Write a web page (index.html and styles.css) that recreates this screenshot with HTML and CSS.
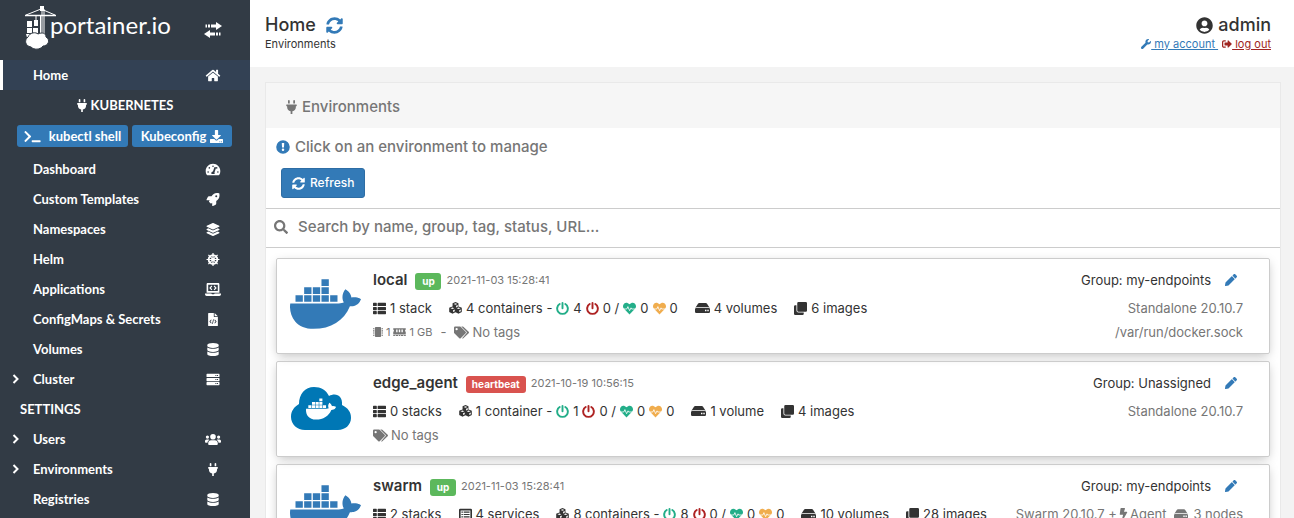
FILE: index.html
```html
<!DOCTYPE html>
<html lang="en">
<head>
<meta charset="utf-8">
<title>Portainer</title>
<link rel="stylesheet" href="styles.css">
</head>
<body>
<svg class="sprite" aria-hidden="true">
  <symbol id="home" viewBox="0 0 576 512"><path d="M280.37 148.26L96 300.11V464a16 16 0 0 0 16 16l112.06-.29a16 16 0 0 0 15.92-16V368a16 16 0 0 1 16-16h64a16 16 0 0 1 16 16v95.64a16 16 0 0 0 16 16.05L464 480a16 16 0 0 0 16-16V300L295.67 148.26a12.19 12.19 0 0 0-15.3 0zM571.6 251.47L488 182.56V44.05a12 12 0 0 0-12-12h-56a12 12 0 0 0-12 12v72.61L318.47 43a48 48 0 0 0-61 0L4.34 251.47a12 12 0 0 0-1.6 16.9l25.5 31A12 12 0 0 0 45.15 301l235.22-193.74a12.19 12.19 0 0 1 15.3 0L530.9 301a12 12 0 0 0 16.9-1.6l25.5-31a12 12 0 0 0-1.7-16.93z"/></symbol>
  <symbol id="plug" viewBox="0 0 384 512"><path d="M320 32a32 32 0 0 0-64 0v96h64zm48 128H16a16 16 0 0 0-16 16v32a16 16 0 0 0 16 16h16v32a160 160 0 0 0 128 156.8V512h64v-99.2A160 160 0 0 0 352 256v-32h16a16 16 0 0 0 16-16v-32a16 16 0 0 0-16-16zM128 32a32 32 0 0 0-64 0v96h64z"/></symbol>
  <symbol id="terminal" viewBox="0 0 640 512"><path d="M257.981 272.971L63.638 467.314c-9.373 9.373-24.569 9.373-33.941 0L7.029 444.647c-9.357-9.357-9.375-24.522-.04-33.901L161.011 256 6.99 101.255c-9.335-9.379-9.317-24.544.04-33.901l22.667-22.667c9.373-9.373 24.569-9.373 33.941 0L257.981 239.03c9.373 9.372 9.373 24.568 0 33.941zM640 456v-32c0-13.255-10.745-24-24-24H312c-13.255 0-24 10.745-24 24v32c0 13.255 10.745 24 24 24h304c13.255 0 24-10.745 24-24z"/></symbol>
  <symbol id="download" viewBox="0 0 512 512"><path fill-rule="evenodd" d="M216 0h80c13.3 0 24 10.7 24 24v168h87.7c17.8 0 26.7 21.5 14.1 34.1L269.7 378.3c-7.5 7.5-19.8 7.5-27.3 0L90.1 226.1c-12.6-12.6-3.7-34.1 14.1-34.1H192V24c0-13.3 10.7-24 24-24zm296 376v112c0 13.3-10.7 24-24 24H24c-13.3 0-24-10.7-24-24V376c0-13.3 10.7-24 24-24h146.7l49 49c20.1 20.1 52.5 20.1 72.6 0l49-49H488c13.3 0 24 10.7 24 24zM368 464a20 20 0 1 0 40 0 20 20 0 0 0-40 0zm64 0a20 20 0 1 0 40 0 20 20 0 0 0-40 0z"/></symbol>
  <symbol id="gauge" viewBox="0 0 576 512"><path fill-rule="evenodd" d="M288 32C129 32 0 161 0 320c0 53 14 102 39 145 6 10 16 15 27 15h444c11 0 21-5 27-15 25-43 39-92 39-145C576 161 447 32 288 32zm0 64a32 32 0 1 1 0 64 32 32 0 0 1 0-64zM96 384a32 32 0 1 1 0-64 32 32 0 0 1 0 64zm48-160a32 32 0 1 1 0-64 32 32 0 0 1 0 64zm247-61c13 4 20 18 15 30l-60 181c14 22 8 48 1 58H229c-20-46 7-92 55-96l61-168c5-13 16-14 46-5zm41 61a32 32 0 1 1 0-64 32 32 0 0 1 0 64zm48 160a32 32 0 1 1 0-64 32 32 0 0 1 0 64z"/></symbol>
  <symbol id="rocket" viewBox="0 0 512 512"><path d="M505.12 19.09c-1.19-5.53-6.66-11-12.21-12.19C460.72 0 435.51 0 410.41 0 307.18 0 245.27 55.2 199.05 128H94.84c-16.35.02-35.56 11.88-42.89 26.48L2.52 253.3A28.4 28.4 0 0 0 0 264a24 24 0 0 0 24 24h103.82l-22.48 22.47c-11.36 11.36-12.99 32.26 0 45.25l50.91 50.9c11.15 11.19 32.15 13.16 45.27 0L224 384.16V488a24 24 0 0 0 24 24 28.56 28.56 0 0 0 10.71-2.52l98.73-49.39c14.63-7.29 26.51-26.5 26.51-42.86V312.8C456.55 266.48 512 204.39 512 101.7c.08-25.2.08-50.4-6.88-82.61zM384 168a40 40 0 1 1 40-40 40 40 0 0 1-40 40z"/></symbol>
  <symbol id="layers" viewBox="0 0 512 512"><path d="M12.41 148.02l232.94 105.67c6.8 3.09 14.49 3.09 21.29 0l232.94-105.67c16.55-7.51 16.55-32.52 0-40.03L266.65 2.31a25.607 25.607 0 0 0-21.29 0L12.41 107.98c-16.55 7.51-16.55 32.53 0 40.04zm487.18 88.28l-58.09-26.33-161.64 73.27c-7.56 3.43-15.59 5.17-23.86 5.17s-16.29-1.74-23.86-5.17L70.51 209.97l-58.1 26.33c-16.55 7.5-16.55 32.5 0 40l232.94 105.59c6.8 3.08 14.49 3.08 21.29 0L499.59 276.3c16.55-7.5 16.55-32.5 0-40zm0 127.8l-57.87-26.23-161.86 73.37c-7.56 3.43-15.59 5.17-23.86 5.17s-16.29-1.74-23.86-5.17L70.29 337.87 12.41 364.1c-16.55 7.5-16.55 32.5 0 40l232.94 105.59c6.8 3.08 14.49 3.08 21.29 0L499.59 404.1c16.55-7.5 16.55-32.5 0-40z"/></symbol>
  <symbol id="helm" viewBox="0 0 512 512"><g fill="none" stroke="currentColor"><circle cx="256" cy="256" r="170" stroke-width="75"/><path stroke-width="48" d="M256 0v512M0 256h512M75 75l362 362M437 75L75 437"/></g><circle cx="256" cy="256" r="65"/></symbol>
  <symbol id="laptop" viewBox="0 0 640 512"><path fill-rule="evenodd" d="M64 48c0-26 22-48 48-48h416c26 0 48 22 48 48v336H64zm64 16v256h384V64zM0 416h255c5 20 13 32 33 32h64c20 0 27-12 33-32h255v32c0 35-29 64-64 64H64c-35 0-64-29-64-64z"/><path fill="none" stroke="currentColor" stroke-width="48" d="M275 115l-72 77 72 77M365 115l72 77-72 77"/></symbol>
  <symbol id="filecode" viewBox="0 0 384 512"><path fill-rule="evenodd" d="M0 24C0 11 11 0 24 0h200v136c0 13 11 24 24 24h136v328c0 13-11 24-24 24H24c-13 0-24-11-24-24zM256 0l128 128H256zM115 256l-65 79 65 79 24-22-47-57 47-57zm82-5l-40 174 28 6 41-174zm72 5l-24 22 47 57-47 57 24 22 65-79z"/></symbol>
  <symbol id="database" viewBox="0 0 448 512"><path d="M448 73.143v45.714C448 159.143 347.667 192 224 192S0 159.143 0 118.857V73.143C0 32.857 100.333 0 224 0s224 32.857 224 73.143zM448 176v102.857C448 319.143 347.667 352 224 352S0 319.143 0 278.857V176c48.125 33.143 136.208 48.572 224 48.572S399.874 209.143 448 176zm0 160v102.857C448 479.143 347.667 512 224 512S0 479.143 0 438.857V336c48.125 33.143 136.208 48.572 224 48.572S399.874 369.143 448 336z"/></symbol>
  <symbol id="server" viewBox="0 0 512 512"><path fill-rule="evenodd" d="M24 32h464q24 0 24 24v80q0 24-24 24H24q-24 0-24-24V56q0-24 24-24zm0 160h464q24 0 24 24v80q0 24-24 24H24q-24 0-24-24v-80q0-24 24-24zm0 160h464q24 0 24 24v80q0 24-24 24H24q-24 0-24-24v-80q0-24 24-24zM350 76v40h40V76zm64 0v40h40V76zm-64 160v40h40v-40zm64 0v40h40v-40zm-64 160v40h40v-40zm64 0v40h40v-40z"/></symbol>
  <symbol id="users" viewBox="0 0 640 512"><circle cx="96" cy="160" r="64"/><circle cx="544" cy="160" r="64"/><circle cx="320" cy="144" r="112"/><path d="M64 256h64c18 0 34 7 45 19-40 22-68 61-74 109H32c-18 0-32-14-32-32v-32c0-35 29-64 64-64zm512 0h-64c-18 0-34 7-45 19 40 22 68 61 74 109h67c18 0 32-14 32-32v-32c0-35-29-64-64-64zM243 288h154c64 0 115 51 115 115v29c0 26-22 48-48 48H176c-26 0-48-22-48-48v-29c0-64 51-115 115-115z"/></symbol>
  <symbol id="chevron" viewBox="0 0 8 12"><path fill="none" stroke="currentColor" stroke-width="2" d="M1.500 2l4 4-4 4"/></symbol>
  <symbol id="sync" viewBox="0 0 512 512"><path d="M370.72 133.28C339.458 104.008 298.888 87.962 255.848 88c-77.458.068-144.328 53.178-162.791 126.85-1.344 5.363-6.122 9.15-11.651 9.15H24.103c-7.498 0-13.194-6.807-11.807-14.176C33.933 94.924 134.813 8 256 8c66.448 0 126.791 26.136 171.315 68.685L463.03 40.97C478.149 25.851 504 36.559 504 57.941V192c0 13.255-10.745 24-24 24H345.941c-21.382 0-32.09-25.851-16.971-40.971l41.75-41.749zM32 296h134.059c21.382 0 32.09 25.851 16.971 40.971l-41.75 41.75c31.262 29.273 71.835 45.319 114.876 45.28 77.418-.07 144.315-53.144 162.787-126.849 1.344-5.363 6.122-9.15 11.651-9.15h57.304c7.498 0 13.194 6.807 11.807 14.176C478.067 417.076 377.187 504 256 504c-66.448 0-126.791-26.136-171.315-68.685L48.97 471.03C33.851 486.149 8 475.441 8 454.059V320c0-13.255 10.745-24 24-24z"/></symbol>
  <symbol id="user" viewBox="0 0 496 512"><path d="M248 8C111 8 0 119 0 256s111 248 248 248 248-111 248-248S385 8 248 8zm0 96c48.600 0 88 39.400 88 88s-39.400 88-88 88-88-39.400-88-88 39.400-88 88-88zm0 344c-58.700 0-111.300-26.600-146.500-68.200 18.800-35.400 55.600-59.800 98.500-59.800 2.400 0 4.800.4 7.100 1.100 13 4.200 26.600 6.900 40.900 6.900s28-2.700 40.900-6.900c2.300-.7 4.700-1.100 7.100-1.100 42.900 0 79.700 24.400 98.500 59.800C359.300 421.400 306.700 448 248 448z"/></symbol>
  <symbol id="wrench" viewBox="0 0 512 512"><path d="M507.730 109.100c-2.240-9.030-13.540-12.090-20.120-5.510l-74.360 74.360-67.880-11.310-11.310-67.880 74.360-74.360c6.620-6.620 3.430-17.900-5.660-20.160-47.380-11.740-99.550.91-136.580 37.930-39.640 39.640-50.550 97.100-34.050 147.200L18.740 402.760c-24.990 24.990-24.990 65.510 0 90.500 24.990 24.990 65.510 24.990 90.500 0l213.210-213.210c50.120 16.710 107.470 5.680 147.370-34.220 37.070-37.070 49.700-89.320 37.910-136.730z"/></symbol>
  <symbol id="signout" viewBox="0 0 512 512"><path d="M497 273L329 441c-15 15-41 4.500-41-17v-96H152c-13.300 0-24-10.700-24-24v-96c0-13.300 10.700-24 24-24h136V88c0-21.400 25.900-32 41-17l168 168c9.300 9.400 9.300 24.600 0 34zM192 436v-40c0-6.600-5.400-12-12-12H96c-17.700 0-32-14.300-32-32V160c0-17.700 14.300-32 32-32h84c6.600 0 12-5.400 12-12V76c0-6.600-5.400-12-12-12H96c-53 0-96 43-96 96v192c0 53 43 96 96 96h84c6.600 0 12-5.400 12-12z"/></symbol>
  <symbol id="info" viewBox="0 0 512 512"><path fill-rule="evenodd" d="M256 8a248 248 0 1 0 0 496 248 248 0 0 0 0-496zm0 300a46 46 0 1 1 0 92 46 46 0 0 1 0-92zm-44-183c0-7 5-13 12-13h64c7 0 12 6 12 13l-8 136c0 6-5 11-12 11h-48c-7 0-12-5-12-11z"/></symbol>
  <symbol id="search" viewBox="0 0 512 512"><path d="M505 442.700L405.300 343c-4.500-4.500-10.600-7-17-7H372c27.600-35.300 44-79.700 44-128C416 93.100 322.900 0 208 0S0 93.100 0 208s93.100 208 208 208c48.300 0 92.700-16.400 128-44v16.300c0 6.400 2.500 12.500 7 17l99.700 99.700c9.400 9.400 24.600 9.400 33.900 0l28.300-28.300c9.400-9.400 9.400-24.600.1-34zM208 336c-70.700 0-128-57.200-128-128 0-70.700 57.200-128 128-128 70.700 0 128 57.200 128 128 0 70.700-57.200 128-128 128z"/></symbol>
  <symbol id="thlist" viewBox="0 0 512 512"><path d="M24 32h102q24 0 24 24v80q0 24-24 24H24q-24 0-24-24V56q0-24 24-24zm182 0h282q24 0 24 24v80q0 24-24 24H206q-24 0-24-24V56q0-24 24-24zM24 192h102q24 0 24 24v80q0 24-24 24H24q-24 0-24-24v-80q0-24 24-24zm182 0h282q24 0 24 24v80q0 24-24 24H206q-24 0-24-24v-80q0-24 24-24zM24 352h102q24 0 24 24v80q0 24-24 24H24q-24 0-24-24v-80q0-24 24-24zm182 0h282q24 0 24 24v80q0 24-24 24H206q-24 0-24-24v-80q0-24 24-24z"/></symbol>
  <symbol id="listalt" viewBox="0 0 512 512"><path fill-rule="evenodd" d="M48 32h416q48 0 48 48v352q0 48-48 48H48q-48 0-48-48V80q0-48 48-48zm16 64v320h384V96zM96 136h56v48H96zm88 0h232v48H184zM96 232h56v48H96zm88 0h232v48H184zM96 328h56v48H96zm88 0h232v48H184z"/></symbol>
  <symbol id="cubes" viewBox="0 0 512 512"><path fill-rule="evenodd" d="M256 0l116 46v127l115 46q17 7 17 25v136q0 16-15 24l-103 51q-14 7-28 0l-102-51-102 51q-14 7-28 0L23 404q-15-8-15-24V244q0-18 17-25l115-46V46zm0 48l-72 28v4l72 30 72-30v-4zm24 102v68l64-28v-67zM134 215l-76 30 76 32 76-32zm244 0l-76 30 76 32 76-32zM160 320v78l66-33v-73zm244 0v78l60-30v-74z"/></symbol>
  <symbol id="power" viewBox="0 0 512 512"><path fill="none" stroke="currentColor" stroke-width="76" stroke-linecap="round" d="M145 80a210 210 0 1 0 222 0M256 38v210"/></symbol>
  <symbol id="heart" viewBox="0 0 512 512"><path d="M256 488L40 262C-20 200-10 112 50 58s144-30 206 34c62-64 146-88 206-34s70 142 10 204z"/><path fill="none" stroke="#fff" stroke-width="32" d="M20 276h130l42-94 68 160 56-112 24 46h152"/></symbol>
  <symbol id="hdd" viewBox="0 0 576 512"><path fill-rule="evenodd" d="M462 96q-15-32-50-32H164q-35 0-50 32L14 246q16-22 50-22h448q34 0 50 22zM48 256h480q48 0 48 48v96q0 48-48 48H48q-48 0-48-48v-96q0-48 48-48zm336 64v64h56v-64zm88 0v64h56v-64z"/></symbol>
  <symbol id="clone" viewBox="0 0 512 512"><path d="M464 0q48 0 48 48v288q0 48-48 48H176q-48 0-48-48V48q0-48 48-48zM176 416h208v48q0 48-48 48H48q-48 0-48-48V176q0-48 48-48h48v208q0 80 80 80z"/></symbol>
  <symbol id="chip" viewBox="0 0 512 512"><path d="M144 0h224q48 0 48 48v416q0 48-48 48H144q-48 0-48-48V48q0-48 48-48zM0 60h70v54H0zm0 112h70v54H0zm0 112h70v54H0zm0 112h70v54H0zM442 60h70v54h-70zm0 112h70v54h-70zm0 112h70v54h-70zm0 112h70v54h-70z"/></symbol>
  <symbol id="memory" viewBox="0 0 640 512"><path fill-rule="evenodd" d="M0 64h640v70q-36 16-36 54t36 54v110H0V242q36-16 36-54T0 134zm150 60v140h70V124zm135 0v140h70V124zm135 0v140h70V124zM0 384h640v72h-84v-40h-48v40H396v-40h-48v40h-56v-40h-48v40H132v-40H84v40H0z"/></symbol>
  <symbol id="tags" viewBox="0 0 640 512"><path fill-rule="evenodd" d="M48 0h204q20 0 34 14l212 212q28 28 0 60L286 498q-28 28-60 0L14 286Q0 272 0 252V48Q0 0 48 0zm64 64a48 48 0 1 0 0 96 48 48 0 0 0 0-96z"/><path d="M310 0h54q20 0 34 14l228 212q28 28 0 60L398 498q-25 25-54 0l188-212q26-30 0-60z"/></symbol>
  <symbol id="pencil" viewBox="0 0 512 512"><path d="M497.900 142.100l-46.100 46.100c-4.700 4.700-12.300 4.700-17 0l-111-111c-4.700-4.700-4.700-12.300 0-17l46.100-46.100c18.700-18.700 49.100-18.700 67.900 0l60.100 60.100c18.800 18.700 18.800 49.100 0 67.900zM284.200 99.800L21.600 362.400.4 483.900c-2.900 16.400 11.400 30.600 27.800 27.800l121.500-21.300 262.600-262.600c4.700-4.700 4.700-12.300 0-17l-111-111c-4.800-4.700-12.400-4.700-17.100 0z"/></symbol>
  <symbol id="bolt" viewBox="0 0 320 512"><path d="M296 160H180.600l42.600-129.800C227.200 15 215.700 0 200 0H56C44 0 33.800 8.900 32.200 20.800l-32 240C-1.700 275.200 9.500 288 24 288h118.700L96.600 482.500c-3.600 15.200 8 29.500 23.300 29.500 8.400 0 16.400-4.400 20.800-12l176-304c9.300-15.900-2.200-36-20.700-36z"/></symbol>
  <symbol id="docker" viewBox="0 32 640 448"><path d="M349.900 236.300h-66.100v-59.400h66.100v59.400zm0-204.300h-66.100v60.700h66.100V32zm78.200 144.800H362v59.400h66.100v-59.400zm-156.300-72.100h-66.100v60.100h66.100v-60.100zm78.100 0h-66.100v60.100h66.100v-60.100zm276.800 100c-14.400-9.700-47.600-13.200-73.100-8.400-3.300-24-16.700-44.900-41.100-63.700l-14-9.300-9.300 14c-18.400 27.800-23.400 73.600-3.700 103.800-8.700 4.700-25.800 11.100-48.400 10.700H2.400c-8.700 50.800 5.800 116.800 44 162.100 37.100 43.900 92.700 66.200 165.400 66.200 157.400 0 273.900-72.500 328.400-204.200 21.400.4 67.600.1 91.300-45.200 1.500-2.500 6.600-13.200 8.500-17.100l-13.300-8.900zm-511.100-27.900h-66v59.400h66.100v-59.400zm78.100 0h-66.100v59.400h66.100v-59.400zm78.100 0h-66.100v59.400h66.100v-59.400zm-78.100-72.100h-66.100v60.100h66.100v-60.100z"/></symbol>
  <symbol id="cloud" viewBox="0 0 60 46"><path d="M14 44C6 44 0 38 0 31c0-6 3-10 8-13C8 8 14 1 23 1c7 0 12 3 15 9 7-4 14 0 13 9 6 3 9 7 9 13 0 7-6 12-13 12z"/></symbol>
</svg>

<div class="app">
  <nav class="sidebar" aria-label="Main">
    <div class="brand">
      <a class="logo" href="#">
        <svg class="crane" viewBox="0 0 31 44" aria-hidden="true">
          <g fill="none" stroke="#fff"><path stroke-width="1.500" d="M0 9.500h31"/><path d="M1 9L16 3l14 6M17 1v34M19 3v32M11 9v6M15.500 10v20"/></g>
          <path fill="#fff" d="M15 0h4v5h-4zM9 14h4v6H9zM2 15h5v6H2zM2 22h5v5H2zM8 22h5v5H8zM1 28h14l-1 7H3z"/>
          <path fill="#fff" stroke="#323b45" d="M6 41c-6-1-7-7-3-10 2-5 8-5 10-3 4-2 8-1 8 3 5 3 2 9-3 9-3 4-9 4-12 1z"/>
        </svg>
        <span>portainer.io</span>
      </a>
      <button class="toggle" aria-label="Toggle sidebar">
        <svg viewBox="0 0 18 16"><path fill="currentColor" d="M7 2.500h5V0l6 4-6 4V5.500H7zM4 2.500h2v3H4zM1.500 2.500H3v3H1.500zM11 10.500H6V8l-6 4 6 4v-2.500h5zM12 10.500h2v3h-2zM15 10.500h1.500v3H15z"/></svg>
      </button>
    </div>
    <a class="item active" href="#"><span>Home</span><svg><use href="#home"/></svg></a>
    <div class="group"><svg><use href="#plug"/></svg>KUBERNETES</div>
    <div class="tools">
      <button class="tool shell"><svg class="wide"><use href="#terminal"/></svg>kubectl shell</button>
      <button class="tool config">Kubeconfig<svg><use href="#download"/></svg></button>
    </div>
    <a class="item" href="#"><span>Dashboard</span><svg><use href="#gauge"/></svg></a>
    <a class="item" href="#"><span>Custom Templates</span><svg><use href="#rocket"/></svg></a>
    <a class="item" href="#"><span>Namespaces</span><svg><use href="#layers"/></svg></a>
    <a class="item" href="#"><span>Helm</span><svg><use href="#helm"/></svg></a>
    <a class="item" href="#"><span>Applications</span><svg><use href="#laptop"/></svg></a>
    <a class="item" href="#"><span>ConfigMaps &amp; Secrets</span><svg><use href="#filecode"/></svg></a>
    <a class="item" href="#"><span>Volumes</span><svg><use href="#database"/></svg></a>
    <a class="item sub" href="#"><svg class="chev"><use href="#chevron"/></svg><span>Cluster</span><svg><use href="#server"/></svg></a>
    <div class="heading">SETTINGS</div>
    <a class="item sub" href="#"><svg class="chev"><use href="#chevron"/></svg><span>Users</span><svg><use href="#users"/></svg></a>
    <a class="item sub" href="#"><svg class="chev"><use href="#chevron"/></svg><span>Environments</span><svg><use href="#plug"/></svg></a>
    <a class="item" href="#"><span>Registries</span><svg><use href="#database"/></svg></a>
  </nav>

  <div class="content">
    <header class="top">
      <div>
        <h1 class="title">Home <a class="reload" href="#" aria-label="Reload"><svg><use href="#sync"/></svg></a></h1>
        <div class="crumb">Environments</div>
      </div>
      <div class="account">
        <div class="title who"><svg><use href="#user"/></svg>admin</div>
        <div class="links">
          <a class="mine" href="#"><svg><use href="#wrench"/></svg><u>&nbsp;my account&nbsp;</u></a>
          <a class="out" href="#"><svg><use href="#signout"/></svg><u>&nbsp;log out</u></a>
        </div>
      </div>
    </header>

    <main class="panel">
      <h2 class="panel-head"><svg><use href="#plug"/></svg>Environments</h2>
      <div class="intro">
        <p class="hint"><svg><use href="#info"/></svg>Click on an environment to manage</p>
        <button class="refresh"><svg><use href="#sync"/></svg>Refresh</button>
      </div>
      <label class="search"><svg><use href="#search"/></svg><input type="text" aria-label="Search environments" placeholder="Search by name, group, tag, status, URL..."></label>

      <div class="list">
        <article class="card">
          <svg class="whale"><use href="#docker"/></svg>
          <div class="info">
            <div class="line head"><b>local</b><span class="badge up">up</span><time>2021-11-03 15:28:41</time></div>
            <div class="line stats">
              <span class="stat"><svg><use href="#thlist"/></svg>1 stack</span>
              <span class="stat"><svg><use href="#cubes"/></svg>4 containers -<svg class="ok"><use href="#power"/></svg>4<svg class="bad"><use href="#power"/></svg>0 /<svg class="ok"><use href="#heart"/></svg>0<svg class="warn"><use href="#heart"/></svg>0</span>
              <span class="stat"><svg class="disk"><use href="#hdd"/></svg>4 volumes</span>
              <span class="stat"><svg><use href="#clone"/></svg>6 images</span>
            </div>
            <div class="line meta"><span class="hw"><svg><use href="#chip"/></svg>1 <svg class="ram"><use href="#memory"/></svg>1 GB</span><span class="dash">-</span><span class="tag"><svg><use href="#tags"/></svg>No tags</span></div>
          </div>
          <div class="side">
            <div class="line grp">Group: my-endpoints<a href="#" aria-label="Edit local"><svg><use href="#pencil"/></svg></a></div>
            <div class="line stats">Standalone 20.10.7</div>
            <div class="line meta">/var/run/docker.sock</div>
          </div>
        </article>

        <article class="card">
          <div class="edge"><svg class="cloud"><use href="#cloud"/></svg><svg class="mini"><use href="#docker"/></svg></div>
          <div class="info">
            <div class="line head"><b>edge_agent</b><span class="badge down">heartbeat</span><time>2021-10-19 10:56:15</time></div>
            <div class="line stats">
              <span class="stat"><svg><use href="#thlist"/></svg>0 stacks</span>
              <span class="stat"><svg><use href="#cubes"/></svg>1 container -<svg class="ok"><use href="#power"/></svg>1<svg class="bad"><use href="#power"/></svg>0 /<svg class="ok"><use href="#heart"/></svg>0<svg class="warn"><use href="#heart"/></svg>0</span>
              <span class="stat"><svg class="disk"><use href="#hdd"/></svg>1 volume</span>
              <span class="stat"><svg><use href="#clone"/></svg>4 images</span>
            </div>
            <div class="line meta"><span class="tag"><svg><use href="#tags"/></svg>No tags</span></div>
          </div>
          <div class="side">
            <div class="line grp">Group: Unassigned<a href="#" aria-label="Edit edge_agent"><svg><use href="#pencil"/></svg></a></div>
            <div class="line stats">Standalone 20.10.7</div>
          </div>
        </article>

        <article class="card">
          <svg class="whale"><use href="#docker"/></svg>
          <div class="info">
            <div class="line head"><b>swarm</b><span class="badge up">up</span><time>2021-11-03 15:28:41</time></div>
            <div class="line stats">
              <span class="stat"><svg><use href="#thlist"/></svg>2 stacks</span>
              <span class="stat"><svg><use href="#listalt"/></svg>4 services</span>
              <span class="stat"><svg><use href="#cubes"/></svg>8 containers -<svg class="ok"><use href="#power"/></svg>8<svg class="bad"><use href="#power"/></svg>0 /<svg class="ok"><use href="#heart"/></svg>0<svg class="warn"><use href="#heart"/></svg>0</span>
              <span class="stat"><svg class="disk"><use href="#hdd"/></svg>10 volumes</span>
              <span class="stat"><svg><use href="#clone"/></svg>28 images</span>
            </div>
          </div>
          <div class="side">
            <div class="line grp">Group: my-endpoints<a href="#" aria-label="Edit swarm"><svg><use href="#pencil"/></svg></a></div>
            <div class="line stats agent">Swarm 20.10.7 +<svg class="bolt"><use href="#bolt"/></svg>Agent<svg class="nodes"><use href="#hdd"/></svg>3 nodes</div>
          </div>
        </article>
      </div>
    </main>
  </div>
</div>
</body>
</html>
```
FILE: styles.css
```css
* { box-sizing: border-box; }
body { margin: 0; font: 500 13px/20px Inter, "Open Sans", sans-serif; color: #333; background: #f3f3f3; }
svg { fill: currentColor; flex: none; width: 14px; height: 14px; }
button { font: inherit; color: inherit; border: 0; cursor: pointer; }
a { color: inherit; text-decoration: none; }
h1, h2, p { margin: 0; }
.sprite { display: none; }
.app { display: flex; height: 100vh; overflow: hidden; }

/* Sidebar */
.sidebar { flex: 0 0 250px; background: #323b45; color: #fff; overflow: hidden; font: 700 13px/20px Lato, sans-serif; }
.brand { height: 60px; display: flex; align-items: center; justify-content: space-between; padding: 0 28px 4px 25px; }
.logo { display: flex; align-items: center; font: 400 24px/32px Lato, sans-serif; }
.logo span { margin: -6px 0 0 -6px; }
.crane { width: 31px; height: 44px; }
.toggle { background: none; padding: 4px 0 0; display: flex; }
.toggle svg { width: 18px; height: 16px; }
.item { display: flex; align-items: center; height: 30px; padding: 0 29px 0 33px; }
.item span { flex: 1; }
.item svg { width: 16px; height: 13px; }
.item.active { background: #334154; border-left: 3px solid #fff; padding-left: 30px; }
.item.sub { padding-left: 12px; }
.item .chev { width: 8px; height: 12px; margin-right: 13px; }
.group { height: 30px; display: flex; align-items: center; justify-content: center; gap: 4px; }
.group svg { width: 10px; height: 13px; }
.tools { height: 34px; display: flex; align-items: flex-start; gap: 4px; padding: 5px 18px 0 17px; }
.tool { display: flex; align-items: center; justify-content: center; height: 22px; padding: 0; background: #337ab7; border-radius: 3px; white-space: nowrap; }
.shell { flex: 111; gap: 8px; }
.config { flex: 100; gap: 4px; }
.tool svg { width: 13px; height: 13px; }
.tool .wide { width: 17px; }
.heading { height: 30px; padding: 5px 20px; }

/* Header */
.content { flex: 1; min-width: 0; overflow: hidden; }
.top { height: 67px; padding: 14px 23px 0 15px; background: #fff; display: flex; justify-content: space-between; }
.title { font-size: 18px; font-weight: 500; line-height: 22px; display: flex; align-items: center; gap: 10px; }
.reload { color: #337ab7; display: flex; }
.title svg { width: 17px; height: 17px; }
.crumb, .links { font-size: 11px; font-weight: 400; line-height: 16px; }
.account { display: flex; flex-direction: column; align-items: flex-end; }
.who { gap: 5px; }
.links { display: flex; gap: 4px; }
.links a { display: flex; align-items: center; }
.links svg { width: 10px; height: 10px; }
.mine { color: #337ab7; }
.out { color: #a02622; }

/* Panel */
.panel { margin: 15px 13px 0 15px; background: #fff; border: 1px solid #e9e9e9; color: #767676; }
.panel-head { height: 45px; display: flex; align-items: center; gap: 5px; padding: 3px 20px 0; background: #f6f6f6; font-size: 15px; font-weight: 500; }
.panel-head svg { width: 11px; }
.intro { height: 80px; padding: 9px 10px 0; }
.hint { display: flex; align-items: center; gap: 5px; font-size: 15px; }
.hint svg { color: #337ab7; }
.refresh { display: flex; align-items: center; gap: 5px; height: 30px; margin: 11px 5px 0; padding: 0 10px; background: #337ab7; border: 1px solid #2e6da4; border-radius: 3px; color: #fff; font-size: 12px; }
.refresh svg { width: 13px; height: 13px; }
.search { display: flex; align-items: center; gap: 10px; height: 40px; padding: 0 8px 2px; border: solid #ccc; border-width: 1px 0; }
.search input { flex: 1; border: 0; outline: 0; padding: 0; font: inherit; font-size: 15px; color: inherit; }
.search input::placeholder { color: #767676; opacity: 1; }

/* Environment cards */
.list { display: flex; flex-direction: column; gap: 7px; padding: 10px; }
.card { display: flex; min-height: 96px; padding: 10px 26px 8px 13px; border: 1px solid #ccc; border-radius: 2px; box-shadow: 0 3px 10px -2px #bbb; font-weight: 400; }
.whale { width: 71px; height: 50px; margin: 10px 12px 0 0; color: #337ab7; }
.edge { width: 71px; margin: 14px 12px 0 0; display: grid; grid-template-columns: 62px; height: 46px; place-items: center; color: #0077b5; }
.edge svg { grid-area: 1 / 1; }
.cloud { width: 60px; height: 46px; }
.edge .mini { width: 30px; height: 22px; color: #fff; }
.info { flex: 1; min-width: 0; }
.line { display: flex; align-items: center; height: 22px; white-space: nowrap; }
.stats { height: 28px; margin: 3px 0 0; color: #333; }
.head b { font-size: 15px; font-weight: 600; color: #333; }
.badge { margin: 3px 5px 0 8px; padding: 0 6px; min-width: 26px; text-align: center; border-radius: 3px; color: #fff; font-size: 10px; font-weight: 700; line-height: 17px; }
.badge.up { background: #5cb85c; }
.badge.down { background: #d9534f; }
.head time { font-size: 11px; color: #767676; }
.stat { display: flex; align-items: center; gap: 4px; margin-right: 17px; }
.stat svg { width: 13px; height: 13px; }
.stat .disk { width: 15px; height: 14px; }
.ok { color: #23ae89; }
.bad { color: #ae2323; }
.warn { color: #f0ad4e; }
.meta { height: 20px; color: #767676; }
.hw, .tag { display: flex; align-items: center; gap: 3px; }
.hw { font-size: 11px; }
.hw svg { width: 10px; height: 10px; }
.hw .ram { width: 13px; }
.dash { margin: 0 8px; }
.tag svg { width: 15px; height: 13px; }
.side { display: flex; flex-direction: column; align-items: flex-end; color: #767676; }
.side .stats { color: #767676; }
.grp { color: #333; padding-right: 6px; gap: 14px; }
.grp a { display: flex; color: #337ab7; }
.grp svg { width: 12px; height: 12px; }
.agent { gap: 2px; }
.agent .bolt { width: 9px; height: 12px; }
.agent .nodes { margin: 0 3px 0 6px; }
```
